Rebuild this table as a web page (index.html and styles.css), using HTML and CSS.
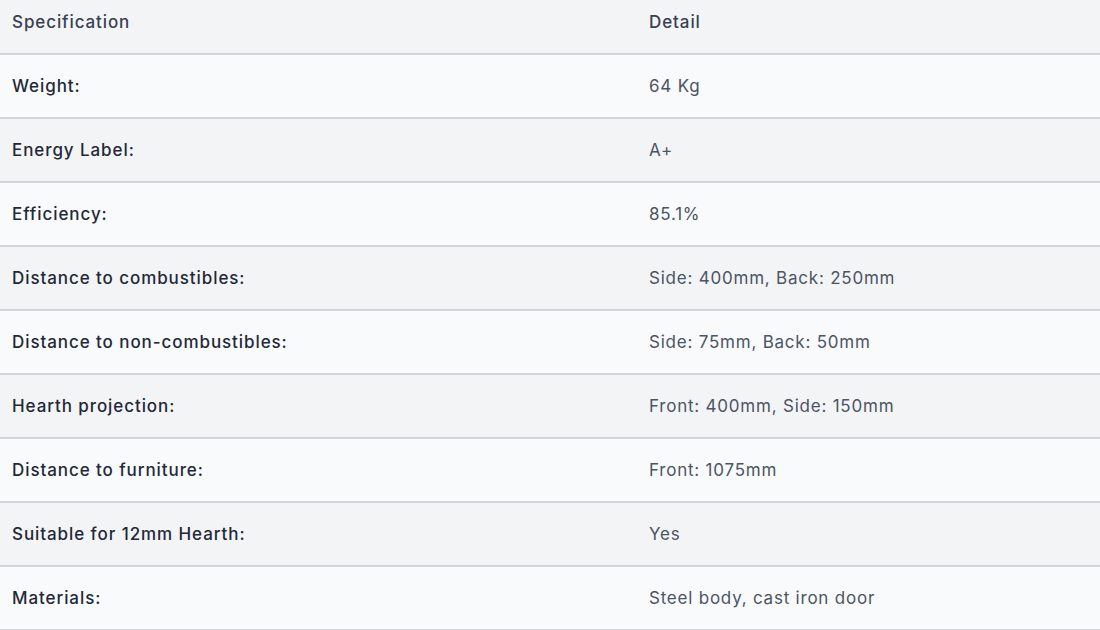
FILE: index.html
```html
<!DOCTYPE html>
<html>
<head>
<meta charset="utf-8">
<link rel="stylesheet" href="styles.css">
</head>
<body>
<table class="spec">
  <thead>
    <tr><th class="c1">Specification</th><th class="c2">Detail</th></tr>
  </thead>
  <tbody>
    <tr><td class="label">Weight:</td><td class="val">64 Kg</td></tr>
    <tr><td class="label">Energy Label:</td><td class="val">A+</td></tr>
    <tr><td class="label">Efficiency:</td><td class="val">85.1%</td></tr>
    <tr><td class="label">Distance to combustibles:</td><td class="val">Side: 400mm, Back: 250mm</td></tr>
    <tr><td class="label">Distance to non-combustibles:</td><td class="val">Side: 75mm, Back: 50mm</td></tr>
    <tr><td class="label">Hearth projection:</td><td class="val">Front: 400mm, Side: 150mm</td></tr>
    <tr><td class="label">Distance to furniture:</td><td class="val">Front: 1075mm</td></tr>
    <tr><td class="label">Suitable for 12mm Hearth:</td><td class="val">Yes</td></tr>
    <tr><td class="label">Materials:</td><td class="val">Steel body, cast iron door</td></tr>
  </tbody>
</table>
</body>
</html>
```
FILE: styles.css
```css
html, body {
  margin: 0;
  padding: 0;
  background: #f9fafb;
}
body {
  font-family: Inter, "Noto Sans", sans-serif;
  font-size: 17px;
  letter-spacing: 0.75px;
}
.spec {
  width: 1100px;
  border-collapse: collapse;
  table-layout: fixed;
}
.spec .c1 { width: 637px; }
.spec th {
  text-align: left;
  font-weight: 500;
  color: #374151;
  background: #f3f4f6;
  height: 54px;
  padding: 0 12px 10px;
  box-sizing: border-box;
  border-bottom: 2px solid #d1d5db;
  vertical-align: middle;
  letter-spacing: 0.9px;
}
.spec td {
  height: 64px;
  box-sizing: border-box;
  padding: 0 12px;
  border-bottom: 2px solid #d1d5db;
  vertical-align: middle;
}
.spec tbody tr:nth-child(odd) { background: #f9fafb; }
.spec tbody tr:nth-child(even) { background: #f3f4f6; }
.label {
  font-weight: 500;
  color: #1f2937;
  letter-spacing: 0.92px;
}
.val {
  color: #4b5563;
  letter-spacing: 0.78px;
}
```
